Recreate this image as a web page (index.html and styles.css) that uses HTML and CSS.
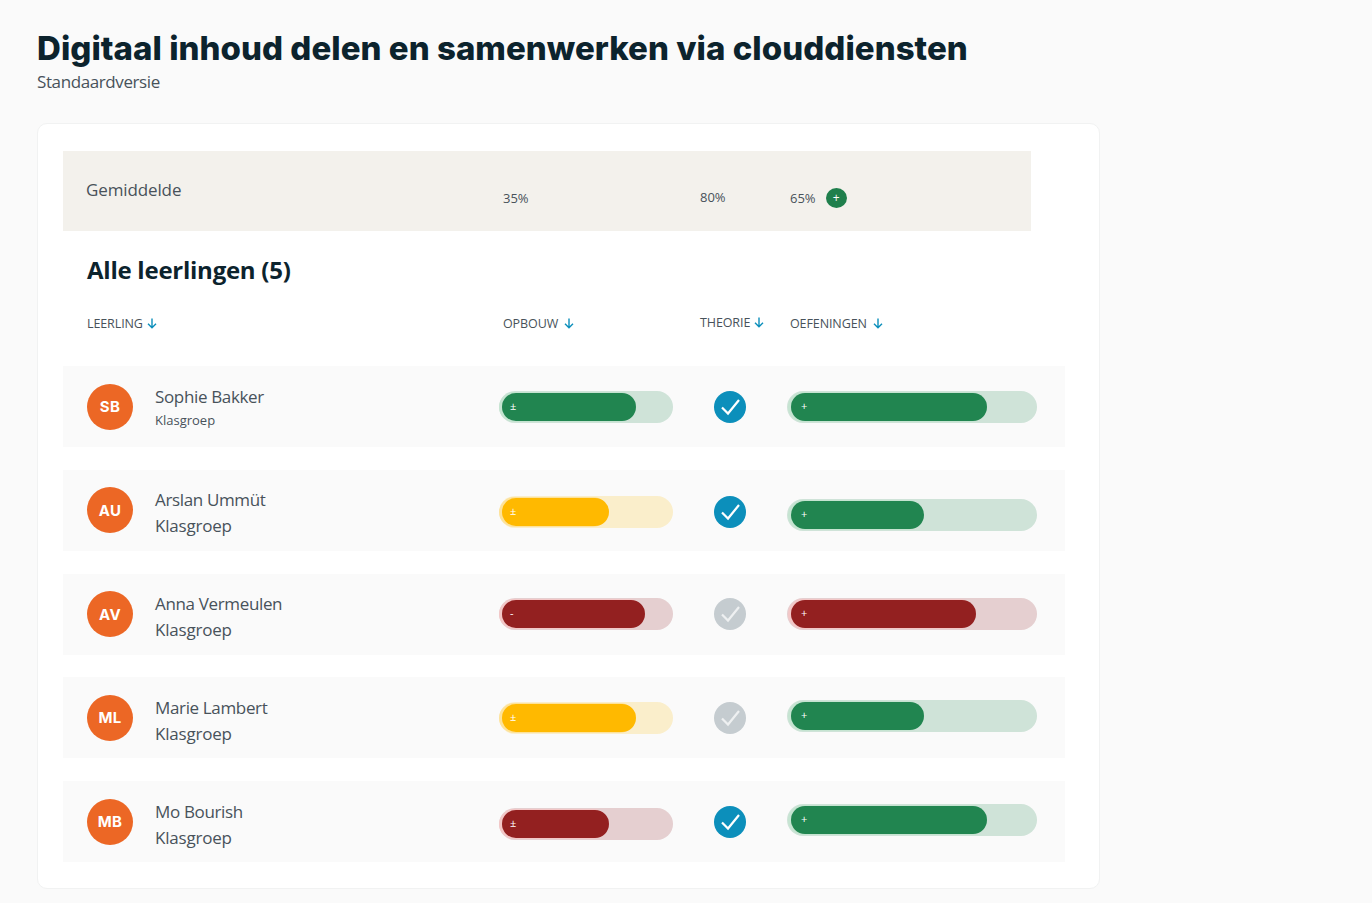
FILE: index.html
```html
<!DOCTYPE html>
<html lang="nl">
<head>
<meta charset="utf-8">
<title>Digitaal inhoud delen en samenwerken via clouddiensten</title>
<link rel="stylesheet" href="styles.css">
</head>
<body>
<header class="page-head">
  <h1>Digitaal inhoud delen en samenwerken via clouddiensten</h1>
  <p class="subtitle">Standaardversie</p>
</header>
<main class="card">
  <section class="average">
    <div class="avg-label">Gemiddelde</div>
    <div class="avg-value">35%</div>
    <div class="avg-value avg-theory">80%</div>
    <div class="avg-value avg-last">65%<span class="plus">+</span></div>
  </section>
  <h2>Alle leerlingen (5)</h2>
  <div class="columns">
    <div class="col">LEERLING <svg class="arrow" viewBox="0 0 10 11"><path d="M5 .5v9M1 5.8l4 4 4-4"/></svg></div>
    <div class="col col-gap">OPBOUW <svg class="arrow" viewBox="0 0 10 11"><path d="M5 .5v9M1 5.8l4 4 4-4"/></svg></div>
    <div class="col col-theory">THEORIE <svg class="arrow" viewBox="0 0 10 11"><path d="M5 .5v9M1 5.8l4 4 4-4"/></svg></div>
    <div class="col col-gap">OEFENINGEN <svg class="arrow" viewBox="0 0 10 11"><path d="M5 .5v9M1 5.8l4 4 4-4"/></svg></div>
  </div>
  <div class="rows">
    <article class="row">
      <div class="person"><span class="avatar">SB</span><div class="who"><div class="name">Sophie Bakker</div><div class="group group-small">Klasgroep</div></div></div>
      <div class="track green"><div class="fill w134">±</div></div>
      <div class="check blue"><svg viewBox="0 0 32 32"><path d="M8 16.5l6 6L25 9"/></svg></div>
      <div class="track wide green"><div class="fill w196">+</div></div>
    </article>
    <article class="row">
      <div class="person"><span class="avatar">AU</span><div class="who"><div class="name">Arslan Ummüt</div><div class="group">Klasgroep</div></div></div>
      <div class="track yellow down-s"><div class="fill w107">±</div></div>
      <div class="check blue down-s"><svg viewBox="0 0 32 32"><path d="M8 16.5l6 6L25 9"/></svg></div>
      <div class="track wide green down-l"><div class="fill w133">+</div></div>
    </article>
    <article class="row">
      <div class="person"><span class="avatar">AV</span><div class="who"><div class="name">Anna Vermeulen</div><div class="group">Klasgroep</div></div></div>
      <div class="track red"><div class="fill w143">-</div></div>
      <div class="check grey"><svg viewBox="0 0 32 32"><path d="M8 16.5l6 6L25 9"/></svg></div>
      <div class="track wide red"><div class="fill w185">+</div></div>
    </article>
    <article class="row">
      <div class="person"><span class="avatar">ML</span><div class="who"><div class="name">Marie Lambert</div><div class="group">Klasgroep</div></div></div>
      <div class="track yellow"><div class="fill w134">±</div></div>
      <div class="check grey"><svg viewBox="0 0 32 32"><path d="M8 16.5l6 6L25 9"/></svg></div>
      <div class="track wide green up-s"><div class="fill w133">+</div></div>
    </article>
    <article class="row">
      <div class="person"><span class="avatar">MB</span><div class="who"><div class="name">Mo Bourish</div><div class="group">Klasgroep</div></div></div>
      <div class="track red down-s"><div class="fill w107">±</div></div>
      <div class="check blue"><svg viewBox="0 0 32 32"><path d="M8 16.5l6 6L25 9"/></svg></div>
      <div class="track wide green up-s"><div class="fill w196">+</div></div>
    </article>
  </div>
</main>
</body>
</html>
```
FILE: styles.css
```css
* { box-sizing: border-box; }
html, body { margin: 0; height: 100%; }
body {
  background: #fafafa;
  color: #48525a;
  font-family: "Open Sans", "Noto Sans", sans-serif;
  padding: 28px 0 0 37px;
  overflow: hidden;
}
h1 {
  margin: 0;
  font-family: Inter, "Liberation Sans", sans-serif;
  font-size: 33px;
  line-height: 40px;
  font-weight: 800;
  letter-spacing: .04px;
  color: #0c232d;
  white-space: nowrap;
}
.subtitle { margin: 2px 0 0; font-size: 17px; line-height: 24px; letter-spacing: -.4px; }
.card {
  width: 1063px;
  height: 766px;
  margin-top: 29px;
  padding: 27px 0 0 25px;
  background: #fff;
  border: 1px solid #f1f2f2;
  border-radius: 10px;
}
.average {
  width: 968px;
  height: 80px;
  display: grid;
  grid-template-columns: 416px 197px 90px 1fr;
  padding-left: 24px;
  background: #f3f1ec;
}
.avg-label { font-size: 17px; line-height: 24px; padding-top: 27px; margin-left: -1px; letter-spacing: -.12px; }
.avg-value { font-size: 13px; line-height: 18px; padding-top: 38px; white-space: nowrap; }
.avg-theory { padding-top: 37px; }
.avg-last { display: flex; align-items: flex-start; }
.plus {
  display: flex;
  align-items: center;
  justify-content: center;
  width: 21px;
  height: 20px;
  margin: -1px 0 0 10px;
  border-radius: 50%;
  background: #1f7f4c;
  color: #fff;
  font-size: 12px;
  line-height: 1;
}
h2 {
  margin: 24px 0 0 24px;
  font-family: "Open Sans", sans-serif;
  font-size: 24px;
  line-height: 30px;
  font-weight: 700;
  letter-spacing: -.25px;
  color: #0c232d;
}
.columns {
  display: grid;
  grid-template-columns: 416px 197px 90px 1fr;
  margin-top: 32px;
  padding-left: 24px;
  height: 14px;
  font-size: 12.5px;
  line-height: 14px;
}
.col { white-space: nowrap; letter-spacing: -.1px; }
.col-theory { margin-top: -1px; }
.arrow { width: 10px; height: 11px; margin-left: 1px; vertical-align: -1px; }
.col-gap .arrow { margin-left: 3px; }
.arrow path { fill: none; stroke: #0c8fbb; stroke-width: 1.4; }
.rows { display: flex; flex-direction: column; gap: 22.75px; margin-top: 35px; }
.row {
  width: 1002px;
  height: 81px;
  display: grid;
  grid-template-columns: 412px 174px 114px 250px;
  align-items: center;
  padding-left: 24px;
  background: #fafafa;
}
.person { display: flex; align-items: center; gap: 22px; }
.avatar {
  flex: none;
  width: 46px;
  height: 46px;
  display: flex;
  align-items: center;
  justify-content: center;
  border-radius: 50%;
  background: #ec6725;
  color: #fff;
  font-family: Inter, sans-serif;
  font-size: 15px;
  font-weight: 700;
  letter-spacing: .3px;
}
.who { padding-top: 6px; }
.name { font-size: 17px; line-height: 24px; letter-spacing: -.35px; white-space: nowrap; }
.group { font-size: 17px; line-height: 24px; margin-top: 2px; letter-spacing: -.2px; }
.group-small { font-size: 13px; margin: -1px 0 2px; letter-spacing: 0; }
.track { height: 32px; border-radius: 16px; padding: 2px 3px; }
.wide { padding-left: 4px; }
.fill {
  height: 28px;
  border-radius: 14px;
  color: #fff;
  font-size: 11px;
  line-height: 25px;
  padding-left: 8px;
}
.wide .fill { padding-left: 10px; }
.green { background: #cfe3d8; }
.green .fill { background: #218550; box-shadow: -2px 0 0 1px #c5e4d1; }
.yellow { background: #faeecb; }
.yellow .fill { background: #ffb900; box-shadow: -2px 0 0 1px #fde29a; }
.red { background: #e5cfd0; }
.red .fill { background: #932020; box-shadow: -2px 0 0 1px #f3c7c7; }
.w107 { width: 107px; }
.w133 { width: 133px; }
.w134 { width: 134px; }
.w143 { width: 143px; }
.w185 { width: 185px; }
.w196 { width: 196px; }
.check {
  width: 32px;
  height: 32px;
  margin-left: 41px;
  border-radius: 50%;
}
.check svg { display: block; width: 32px; height: 32px; }
.check path { fill: none; stroke: #fff; stroke-width: 2.2; }
.blue { background: #0c8fbb; }
.grey { background: #c5ccd0; }
.check.grey path { stroke: #eef0f1; }
.down-s { margin-top: 4px; }
.down-l { margin-top: 9px; }
.up-s { margin-top: -4px; }
```
